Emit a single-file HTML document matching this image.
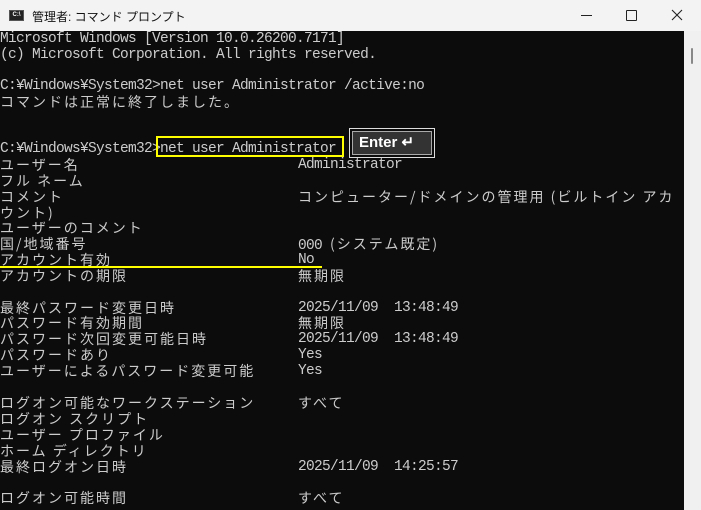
<!DOCTYPE html>
<html><head><meta charset="utf-8"><style>
body{margin:0;width:701px;height:510px;overflow:hidden;background:#f3f3f3;position:relative;font-family:"Liberation Mono","Noto Sans CJK JP",monospace}
#tb{position:absolute;left:0;top:0;width:701px;height:31px;background:#f3f3f3}
#con{position:absolute;left:0;top:31px;width:684px;height:479px;background:#0c0c0c;overflow:hidden}
#sb{position:absolute;left:684px;top:31px;width:17px;height:479px;background:#f0f0f0}
.l{position:absolute;left:0;height:16px;line-height:16px;font-size:14.5px;letter-spacing:-0.7px;color:#cccccc;white-space:pre}
.j{font-family:"Noto Sans CJK JP",sans-serif;font-size:14px;letter-spacing:2px}
.v{position:absolute;left:298px;top:0}
</style></head><body>
<div id="tb">
<div style="position:absolute;left:9px;top:10px;width:15px;height:11px;background:#222;border:1px solid #555;box-sizing:border-box;color:#fff;font:bold 6px 'Liberation Sans';line-height:9px;text-align:center">C:\</div>
<div style="position:absolute;left:32px;top:8px;font:12px 'Liberation Sans','Noto Sans CJK JP',sans-serif;color:#111">管理者: コマンド プロンプト</div>
<div style="position:absolute;left:581px;top:15px;width:11px;height:1px;background:#222"></div>
<div style="position:absolute;left:626px;top:10px;width:9px;height:9px;border:1px solid #222;border-radius:1px"></div>
<svg style="position:absolute;left:671px;top:9px" width="12" height="12"><path d="M1 1L11 11M11 1L1 11" stroke="#222" stroke-width="1.1"/></svg>
</div>
<div id="con"></div>
<div id="sb"><div style="position:absolute;left:7px;top:17px;width:2px;height:16px;background:#888;border-radius:1px"></div></div>
<div id="txt">
<div class="l" style="top:31px">Microsoft Windows [Version 10.0.26200.7171]</div>
<div class="l" style="top:47px">(c) Microsoft Corporation. All rights reserved.</div>
<div class="l" style="top:78px">C:¥Windows¥System32&gt;net user Administrator /active:no</div>
<div class="l" style="top:94px"><span class="j">コマンドは正常に終了しました。</span></div>
<div class="l" style="top:141px">C:¥Windows¥System32&gt;net user Administrator</div>
<div class="l" style="top:157px"><span class="j">ユーザー名</span><span class="v">Administrator</span></div>
<div class="l" style="top:173px"><span class="j">フル ネーム</span></div>
<div class="l" style="top:189px"><span class="j">コメント</span><span class="v j">コンピューター/ドメインの管理用 (ビルトイン アカ</span></div>
<div class="l" style="top:205px"><span class="j">ウント)</span></div>
<div class="l" style="top:220px"><span class="j">ユーザーのコメント</span></div>
<div class="l" style="top:236px"><span class="j">国/地域番号</span><span class="v">000 <span class="j">(システム既定)</span></span></div>
<div class="l" style="top:252px"><span class="j">アカウント有効</span><span class="v">No</span></div>
<div class="l" style="top:268px"><span class="j">アカウントの期限</span><span class="v j">無期限</span></div>
<div class="l" style="top:300px"><span class="j">最終パスワード変更日時</span><span class="v">2025/11/09  13:48:49</span></div>
<div class="l" style="top:315px"><span class="j">パスワード有効期間</span><span class="v j">無期限</span></div>
<div class="l" style="top:331px"><span class="j">パスワード次回変更可能日時</span><span class="v">2025/11/09  13:48:49</span></div>
<div class="l" style="top:347px"><span class="j">パスワードあり</span><span class="v">Yes</span></div>
<div class="l" style="top:363px"><span class="j">ユーザーによるパスワード変更可能</span><span class="v">Yes</span></div>
<div class="l" style="top:395px"><span class="j">ログオン可能なワークステーション</span><span class="v j">すべて</span></div>
<div class="l" style="top:411px"><span class="j">ログオン スクリプト</span></div>
<div class="l" style="top:427px"><span class="j">ユーザー プロファイル</span></div>
<div class="l" style="top:443px"><span class="j">ホーム ディレクトリ</span></div>
<div class="l" style="top:459px"><span class="j">最終ログオン日時</span><span class="v">2025/11/09  14:25:57</span></div>
<div class="l" style="top:490px"><span class="j">ログオン可能時間</span><span class="v j">すべて</span></div>
</div>
<div style="position:absolute;left:156px;top:136px;width:188px;height:21px;border:2px solid #ffff00;box-sizing:border-box"></div>
<div style="position:absolute;left:349px;top:128px;width:86px;height:30px;border:1px solid #ddd;box-sizing:border-box;padding:2px"><div style="width:100%;height:100%;background:#333;border:1px solid #aaa;box-sizing:border-box;color:#fff;font:bold 15px 'Liberation Sans',sans-serif;line-height:22px;padding-left:6px">Enter ↵</div></div>
<div style="position:absolute;left:0;top:266px;width:322px;height:2px;background:#ffff00"></div>
</body></html>
